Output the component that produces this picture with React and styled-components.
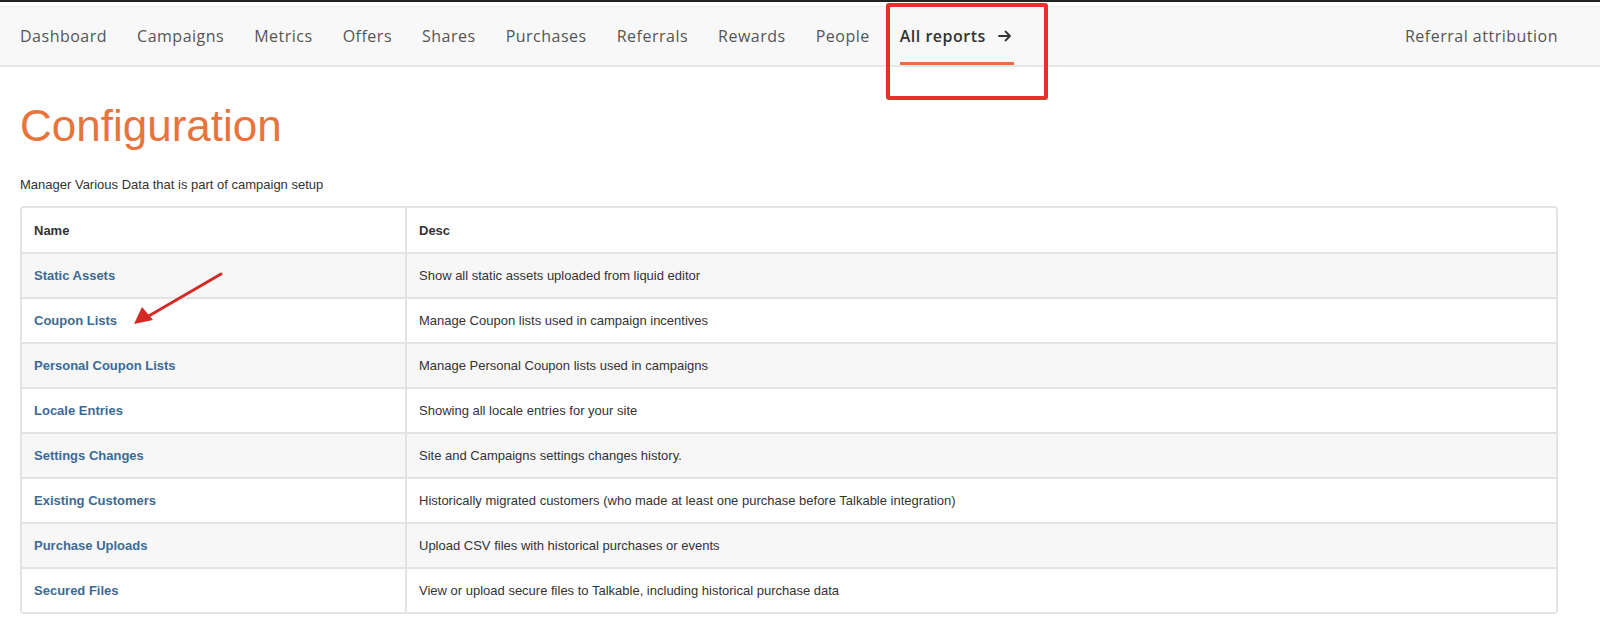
import React from "react";
import styled, { createGlobalStyle } from "styled-components";

const GlobalStyle = createGlobalStyle`
  body {
    margin: 0;
    background: #fff;
    overflow: hidden;
    font-family: "Liberation Sans", Arial, sans-serif;
  }
`;

const Page = styled.div`
  position: relative;
  box-sizing: border-box;
  width: 1600px;
  height: 627px;
  overflow: hidden;
  border-top: 2px solid #222;
`;

const NavBar = styled.nav`
  margin-top: 4px;
  height: 58px;
  background: #f8f8f8;
  border-top: 1px solid #ececec;
  border-bottom: 2px solid #e6e6e6;
  display: flex;
  align-items: stretch;
  padding: 0 42px 0 20px;
`;

const NavList = styled.div`
  display: flex;
  gap: 30px;
  flex: 1;
`;

const NavItem = styled.a`
  position: relative;
  display: flex;
  align-items: center;
  gap: 12px;
  font-family: "Open Sans", sans-serif;
  font-size: 16px;
  letter-spacing: 0.5px;
  font-weight: ${(p) => (p.active ? 600 : 500)};
  color: ${(p) => (p.active ? "#333" : "#555")};
  text-decoration: none;
  white-space: nowrap;

  &::after {
    content: "";
    display: ${(p) => (p.active ? "block" : "none")};
    position: absolute;
    left: 0;
    right: -2px;
    bottom: 0;
    height: 3px;
    background: #ee6b3a;
  }
`;

const Highlight = styled.div`
  position: absolute;
  left: 886px;
  top: 1px;
  width: 154px;
  height: 89px;
  border: 4px solid #e4322b;
  border-radius: 3px;
  pointer-events: none;
`;

const Content = styled.main`
  padding: 34px 42px 0 20px;
`;

const Title = styled.h1`
  margin: 0;
  font-family: "Liberation Sans", Arial, sans-serif;
  font-weight: 400;
  font-size: 44px;
  line-height: 50px;
  color: #e8743b;
`;

const Subtitle = styled.p`
  margin: 26px 0 14px;
  font-size: 13px;
  color: #333;
`;

const Table = styled.table`
  width: 100%;
  border-collapse: separate;
  border-spacing: 0;
  border: 2px solid #e3e3e3;
  border-radius: 4px;
  font-size: 13px;
`;

const HeadCell = styled.th`
  text-align: left;
  font-weight: 700;
  color: #333;
  height: 44px;
  padding: 0 12px;
  border-bottom: 2px solid #e3e3e3;
  border-left: ${(p) => (p.first ? "none" : "2px solid #e3e3e3")};
  width: ${(p) => (p.first ? "359px" : "auto")};
`;

const Row = styled.tr`
  background: ${(p) => (p.striped ? "#f7f7f7" : "#fff")};
`;

const Cell = styled.td`
  height: 43px;
  padding: 0 12px;
  color: #333;
  border-bottom: ${(p) => (p.last ? "none" : "2px solid #e3e3e3")};
  border-left: ${(p) => (p.first ? "none" : "2px solid #e3e3e3")};
`;

const NameLink = styled.a`
  color: #3d6a94;
  font-weight: 700;
  text-decoration: none;
`;

const Pointer = styled.svg`
  position: absolute;
  left: 125px;
  top: 262px;
  pointer-events: none;
`;

const navItems = [
  "Dashboard",
  "Campaigns",
  "Metrics",
  "Offers",
  "Shares",
  "Purchases",
  "Referrals",
  "Rewards",
  "People",
];

const rows = [
  ["Static Assets", "Show all static assets uploaded from liquid editor"],
  ["Coupon Lists", "Manage Coupon lists used in campaign incentives"],
  ["Personal Coupon Lists", "Manage Personal Coupon lists used in campaigns"],
  ["Locale Entries", "Showing all locale entries for your site"],
  ["Settings Changes", "Site and Campaigns settings changes history."],
  [
    "Existing Customers",
    "Historically migrated customers (who made at least one purchase before Talkable integration)",
  ],
  ["Purchase Uploads", "Upload CSV files with historical purchases or events"],
  [
    "Secured Files",
    "View or upload secure files to Talkable, including historical purchase data",
  ],
];

const App = () => {
  return (
    <Page>
      <GlobalStyle />
      <NavBar>
        <NavList>
          {navItems.map((item) => (
            <NavItem key={item}>{item}</NavItem>
          ))}
          <NavItem active>
            All reports
            <svg width="14" height="12" viewBox="0 0 14 12" fill="none">
              <path
                d="M1 6h11M7.5 1.5 12 6l-4.5 4.5"
                stroke="#333"
                strokeWidth="1.8"
                strokeLinecap="round"
                strokeLinejoin="round"
              />
            </svg>
          </NavItem>
        </NavList>
        <NavItem>Referral attribution</NavItem>
      </NavBar>
      <Highlight />
      <Content>
        <Title>Configuration</Title>
        <Subtitle>Manager Various Data that is part of campaign setup</Subtitle>
        <Table>
          <thead>
            <tr>
              <HeadCell first>Name</HeadCell>
              <HeadCell>Desc</HeadCell>
            </tr>
          </thead>
          <tbody>
            {rows.map(([name, desc], i) => (
              <Row key={name} striped={i % 2 === 0}>
                <Cell first last={i === rows.length - 1}>
                  <NameLink>{name}</NameLink>
                </Cell>
                <Cell last={i === rows.length - 1}>{desc}</Cell>
              </Row>
            ))}
          </tbody>
        </Table>
      </Content>
      <Pointer width="110" height="70" viewBox="0 0 110 70">
        <line x1="96" y1="10" x2="22" y2="53" stroke="#d42a25" strokeWidth="3" strokeLinecap="round" />
        <path d="M9 60 L17 43 L28 56 Z" fill="#d42a25" />
      </Pointer>
    </Page>
  );
};

export default App;
